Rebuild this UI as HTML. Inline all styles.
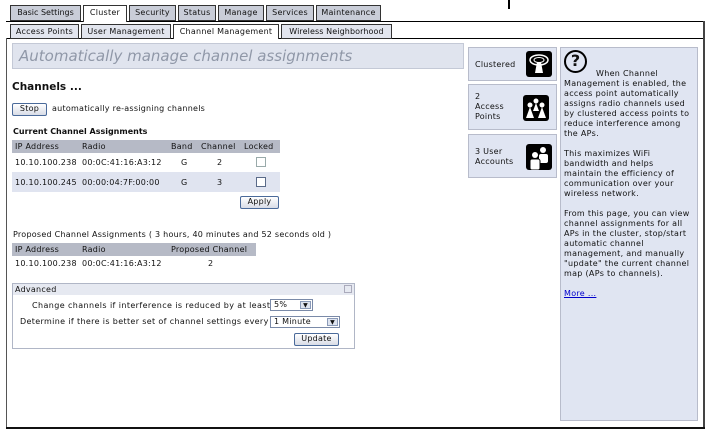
<!DOCTYPE html>
<html><head><style>
*{margin:0;padding:0;box-sizing:border-box}
body{width:706px;height:430px;background:#fff;position:relative;overflow:hidden;font-family:"DejaVu Sans","Liberation Sans",sans-serif;font-size:8px;color:#111;letter-spacing:0.25px}
.a{position:absolute;white-space:nowrap}
.tab{position:absolute;height:16px;border:1px solid #333;background:#c9cdd8;font-size:8px;line-height:14px;text-align:center}
.sub{position:absolute;height:15px;border:1px solid #333;background:#e2e5ee;font-size:8px;line-height:13px;text-align:center}
.btn{position:absolute;border:1px solid #4a6a9a;border-radius:2px;background:linear-gradient(#fff,#d8dce6);font-size:8px;text-align:center;line-height:10px;height:13px}
.cb{position:absolute;width:10px;height:10px;border:1px solid #5a6a88;background:#fff}
.side{position:absolute;left:468px;width:89px;background:#e0e5f2;border:1px solid #b8bccb;font-size:8px;line-height:10px}
.ico{position:absolute;width:26px;height:26px;background:#000;border-radius:3px}
.sel{position:absolute;height:12px;border:1px solid #7a8aa8;background:#fff;font-size:8px;line-height:10px;padding-left:3px}
.sel i{position:absolute;right:1px;top:1px;width:11px;height:8px;border:1px solid #8a9ab8;background:#dde3ef;font-style:normal;font-size:6px;line-height:7px;text-align:center}
</style></head><body>
<div class="a" style="left:508px;top:0;width:2px;height:9px;background:#000"></div>
<div class="a" style="left:380px;top:21px;width:325px;height:1px;background:#000"></div>
<div class="a" style="left:6px;top:38px;width:699px;height:1px;background:#000"></div>
<div class="a" style="left:6px;top:38px;width:1px;height:390px;background:#555"></div>
<div class="a" style="left:703px;top:21px;width:2px;height:407px;background:#444"></div>
<div class="a" style="left:6px;top:427px;width:699px;height:2px;background:#111"></div>
<div class="tab" style="left:10px;top:5px;width:71px;letter-spacing:0">Basic Settings</div>
<div class="tab" style="left:83px;top:5px;width:44px;background:#fff;border-bottom:none;height:17px">Cluster</div>
<div class="tab" style="left:129px;top:5px;width:47px">Security</div>
<div class="tab" style="left:178px;top:5px;width:38px">Status</div>
<div class="tab" style="left:218px;top:5px;width:46px">Manage</div>
<div class="tab" style="left:266px;top:5px;width:48px">Services</div>
<div class="tab" style="left:316px;top:5px;width:65px">Maintenance</div>
<div class="a" style="left:6px;top:21px;width:77px;height:1px;background:#000"></div>
<div class="a" style="left:127px;top:21px;width:254px;height:1px;background:#000"></div>
<div class="sub" style="left:10px;top:24px;width:69px">Access Points</div>
<div class="sub" style="left:81px;top:24px;width:90px">User Management</div>
<div class="sub" style="left:173px;top:24px;width:106px;background:#fff;border-bottom:none;height:15px">Channel Management</div>
<div class="sub" style="left:281px;top:24px;width:111px;letter-spacing:0.1px">Wireless Neighborhood</div>
<div class="a" style="left:12px;top:43px;width:452px;height:26px;background:#e0e4ee;border:1px solid #c4c9d6;font-style:italic;color:#9098a8;font-size:15px;line-height:24px;padding-left:6px;letter-spacing:0">Automatically manage channel assignments</div>
<div class="a" style="left:12px;top:81px;font-size:10.5px;font-weight:bold;letter-spacing:0">Channels ...</div>
<div class="btn" style="left:12px;top:103px;width:35px">Stop</div>
<div class="a" style="left:52px;top:104px">automatically re-assigning channels</div>
<div class="a" style="left:13px;top:127px;font-weight:bold;letter-spacing:0">Current Channel Assignments</div>
<div class="a" style="left:12px;top:140px;width:268px;height:13px;background:#b6bac6"></div>
<div class="a" style="left:15px;top:142px">IP Address</div>
<div class="a" style="left:82px;top:142px">Radio</div>
<div class="a" style="left:171px;top:142px">Band</div>
<div class="a" style="left:201px;top:142px">Channel</div>
<div class="a" style="left:244px;top:142px">Locked</div>
<div class="a" style="left:15px;top:158px">10.10.100.238</div>
<div class="a" style="left:82px;top:158px">00:0C:41:16:A3:12</div>
<div class="a" style="left:181px;top:158px">G</div>
<div class="a" style="left:217px;top:158px">2</div>
<div class="cb" style="left:256px;top:157px;border-color:#9aa"></div>
<div class="a" style="left:12px;top:172px;width:268px;height:20px;background:#e0e4f0"></div>
<div class="a" style="left:15px;top:178px">10.10.100.245</div>
<div class="a" style="left:82px;top:178px">00:00:04:7F:00:00</div>
<div class="a" style="left:181px;top:178px">G</div>
<div class="a" style="left:217px;top:178px">3</div>
<div class="cb" style="left:256px;top:177px"></div>
<div class="btn" style="left:240px;top:196px;width:39px">Apply</div>
<div class="a" style="left:13px;top:230px">Proposed Channel Assignments ( 3 hours, 40 minutes and 52 seconds old )</div>
<div class="a" style="left:12px;top:243px;width:244px;height:13px;background:#b6bac6"></div>
<div class="a" style="left:15px;top:245px">IP Address</div>
<div class="a" style="left:82px;top:245px">Radio</div>
<div class="a" style="left:171px;top:245px">Proposed Channel</div>
<div class="a" style="left:15px;top:259px">10.10.100.238</div>
<div class="a" style="left:82px;top:259px">00:0C:41:16:A3:12</div>
<div class="a" style="left:208px;top:259px">2</div>
<div class="a" style="left:12px;top:283px;width:343px;height:66px;border:1px solid #b0b6c6"></div>
<div class="a" style="left:13px;top:284px;width:341px;height:11px;background:#e6e9f1"></div>
<div class="a" style="left:15px;top:285px">Advanced</div>
<div class="a" style="left:344px;top:285px;width:8px;height:8px;border:1px solid #aab"></div>
<div class="a" style="left:32px;top:301px;letter-spacing:0.4px">Change channels if interference is reduced by at least</div>
<div class="sel" style="left:270px;top:299px;width:43px">5%<i>▼</i></div>
<div class="a" style="left:20px;top:317px;letter-spacing:0.35px">Determine if there is better set of channel settings every</div>
<div class="sel" style="left:270px;top:316px;width:70px">1 Minute<i>▼</i></div>
<div class="btn" style="left:294px;top:333px;width:45px">Update</div>
<div class="side" style="top:47px;height:34px"><span class="a" style="left:6px;top:12px">Clustered</span>
<div class="ico" style="left:57px;top:3px"><svg width="26" height="26"><ellipse cx="13" cy="9" rx="9" ry="5" fill="none" stroke="#fff" stroke-width="1.5"/><ellipse cx="13" cy="9" rx="5" ry="2.5" fill="none" stroke="#fff"/><path d="M11 11 L9 22 L17 22 L15 11Z" fill="#fff"/></svg></div></div>
<div class="side" style="top:84px;height:46px"><span class="a" style="left:6px;top:7px;white-space:normal;width:40px">2<br>Access<br>Points</span>
<div class="ico" style="left:54px;top:10px"><svg width="26" height="26"><circle cx="7" cy="10" r="2.5" fill="#fff"/><path d="M3 23 L7 12 L11 23Z" fill="#fff"/><circle cx="13" cy="6" r="2.5" fill="#fff"/><path d="M10 16 L13 8 L16 16Z" fill="#fff"/><circle cx="19" cy="10" r="2.5" fill="#fff"/><path d="M15 23 L19 12 L23 23Z" fill="#fff"/></svg></div></div>
<div class="side" style="top:134px;height:44px"><span class="a" style="left:6px;top:12px;white-space:normal;width:45px">3 User<br>Accounts</span>
<div class="ico" style="left:57px;top:9px"><svg width="26" height="26"><circle cx="17" cy="6" r="3" fill="#fff"/><rect x="13" y="10" width="9" height="9" rx="2" fill="#fff"/><circle cx="9" cy="11" r="3" fill="#fff"/><rect x="4" y="15" width="10" height="11" rx="2" fill="#fff" stroke="#000"/></svg></div></div>
<div class="a" style="left:560px;top:47px;width:138px;height:374px;background:#e0e5f2;border:1px solid #b8bccb;white-space:normal;font-size:8px;line-height:10px;padding:3px 3px 0 3px;letter-spacing:0.3px">
<div style="position:absolute;left:3px;top:2px;width:23px;height:23px;border:2.5px solid #000;border-radius:50%;font-weight:bold;font-size:16px;line-height:18px;text-align:center;letter-spacing:0">?</div>
<div style="padding-left:32px;padding-top:18px">When Channel</div>
Management is enabled, the access point automatically assigns radio channels used by clustered access points to reduce interference among the APs.<br><br>This maximizes WiFi bandwidth and helps maintain the efficiency of communication over your wireless network.<br><br>From this page, you can view channel assignments for all APs in the cluster, stop/start automatic channel management, and manually "update" the current channel map (APs to channels).<br><br><span style="color:#00c;text-decoration:underline">More ...</span></div>
</body></html>
